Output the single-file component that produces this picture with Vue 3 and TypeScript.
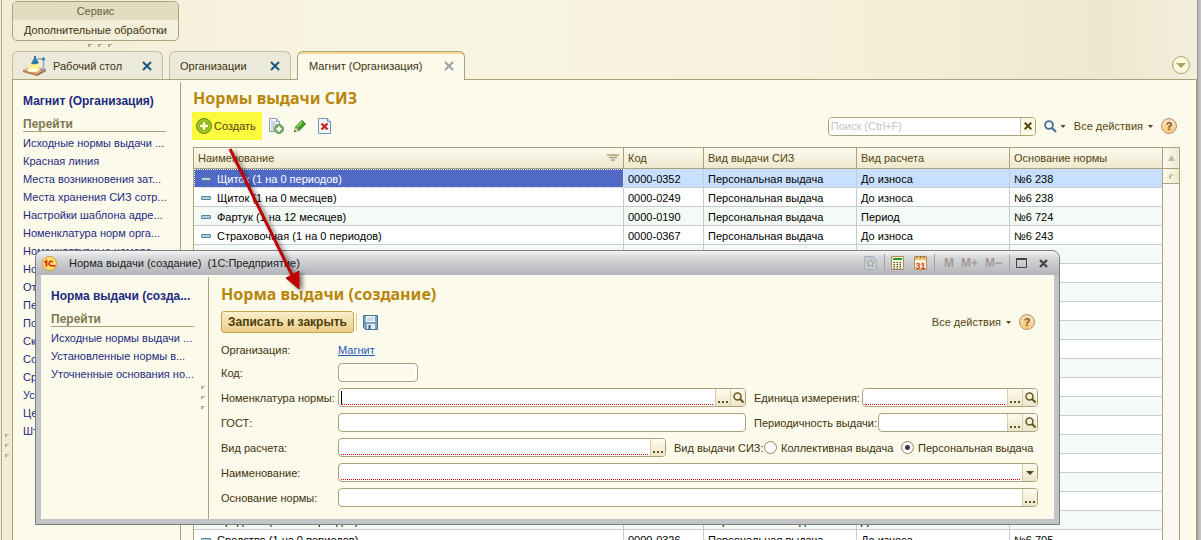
<script setup lang="ts">
import { ref } from 'vue'

interface NormRow {
  name: string
  code: string
  issue: string
  calc: string
  basis: string
}

const blank: NormRow = { name: '', code: '', issue: '', calc: '', basis: '' }
const issue = 'Персональная выдача'

const rows: NormRow[] = [
  { name: 'Щиток (1 на 0 периодов)', code: '0000-0352', issue, calc: 'До износа', basis: '№6 238' },
  { name: 'Щиток (1 на 0 месяцев)', code: '0000-0249', issue, calc: 'До износа', basis: '№6 238' },
  { name: 'Фартук (1 на 12 месяцев)', code: '0000-0190', issue, calc: 'Период', basis: '№6 724' },
  { name: 'Страховочная (1 на 0 периодов)', code: '0000-0367', issue, calc: 'До износа', basis: '№6 243' },
  ...Array.from({ length: 14 }, () => blank),
  { name: 'Средство (1 на 0 периодов)', code: '', issue, calc: 'До износа', basis: '' },
  { name: 'Средство (1 на 0 периодов)', code: '0000-0326', issue, calc: 'До износа', basis: '№6 705' },
]

const pageLinks = [
  'Исходные нормы выдачи ...',
  'Красная линия',
  'Места возникновения зат...',
  'Места хранения СИЗ сотр...',
  'Настройки шаблона адре...',
  'Номенклатура норм орга...',
  'Номенклатурные номера',
  'Но', 'От', 'Пе', 'По', 'Ск', 'Со', 'Ср', 'Ус', 'Це', 'Шт',
]

const dialogLinks = ['Исходные нормы выдачи ...', 'Установленные нормы в...', 'Уточненные основания но...']

const search = ref('')
const issueKind = ref('personal')
</script>

<template>
  <div class="app">
    <div class="rail"><i></i><i></i><i></i></div>

    <div class="desk">
      <section class="service">
        <h2>Сервис</h2>
        <a href="#">Дополнительные обработки</a>
      </section>
      <div class="grip"><i></i><i></i><i></i></div>

      <nav class="tabs">
        <div class="tab first">
          <svg class="lamp" width="24" height="20" viewBox="0 0 24 20" aria-hidden="true">
            <path d="M0 14 9 10l14 3-9 5z" fill="#d9a877" />
            <path d="M0 14v2l14 4v-2z" fill="#b97a4c" />
            <path d="M14 18v2l9-5v-2z" fill="#a2653d" />
            <path d="M8 7 4 14q5 3 13 0l-3-7z" fill="#fff08a" />
            <ellipse cx="10" cy="14" rx="6" ry="2" fill="#fffbd8" />
            <path d="M11 0h2v2l3 5q-4 2-8 1l3-6z" fill="#2c7ba6" />
            <path d="M13 3h8M20.500 3v10" stroke="#8fabbb" stroke-width="1.500" fill="none" />
            <circle cx="20.500" cy="3" r="1.700" fill="#3f86b0" />
            <path d="M17 13h6l-1 2h-4z" fill="#8b9aa4" />
          </svg>
          <a href="#">Рабочий стол</a>
          <button type="button" class="close" aria-label="Закрыть">
            <svg width="10" height="10" viewBox="0 0 10 10"><path d="M1 1l8 8M9 1 1 9" stroke="#1f5580" stroke-width="2" /></svg>
          </button>
        </div>
        <div class="tab second">
          <a href="#">Организации</a>
          <button type="button" class="close" aria-label="Закрыть">
            <svg width="10" height="10" viewBox="0 0 10 10"><path d="M1 1l8 8M9 1 1 9" stroke="#1f5580" stroke-width="2" /></svg>
          </button>
        </div>
        <div class="tab active">
          <a href="#">Магнит (Организация)</a>
          <button type="button" class="close" aria-label="Закрыть">
            <svg width="10" height="10" viewBox="0 0 10 10"><path d="M1 1l8 8M9 1 1 9" stroke="#9aa3a8" stroke-width="2" /></svg>
          </button>
        </div>
        <button type="button" class="tablist" aria-label="Список вкладок">
          <svg width="10" height="5" viewBox="0 0 10 5"><path d="M0 0h10L5 5z" fill="#aea26b" /></svg>
        </button>
      </nav>

      <main class="page">
        <aside class="side">
          <h3>Магнит (Организация)</h3>
          <h4>Перейти</h4>
          <a v-for="(link, i) in pageLinks" :key="i" href="#">{{ link }}</a>
        </aside>

        <section class="list">
          <h1>Нормы выдачи СИЗ</h1>
          <div class="toolbar">
            <button type="button" class="create">
              <svg width="16" height="16" viewBox="0 0 16 16" aria-hidden="true">
                <circle cx="8" cy="8" r="7.500" fill="#8fb51c" stroke="#6d8d1c" />
                <circle cx="8" cy="8" r="6" fill="none" stroke="#b5d52e" />
                <path d="M8 4v8M4 8h8" stroke="#fbffd0" stroke-width="2.500" />
              </svg>
              Создать
            </button>
            <button type="button" class="tool copy" aria-label="Скопировать">
              <svg width="16" height="16" viewBox="0 0 16 16">
                <path d="M1.500.5h7l3 3v10h-10z" fill="#f4f8fb" stroke="#8ba1b3" />
                <path d="M8.500.5v3h3" fill="#d5e1ea" stroke="#8ba1b3" />
                <path d="M3 4h4M3 6h6M3 8h6M3 10h4M3 12h3" stroke="#9eb3c2" />
                <circle cx="11" cy="11" r="4.500" fill="#83b26e" stroke="#5c8a57" />
                <path d="M11 8.500v5M8.500 11h5" stroke="#fff" stroke-width="2" />
              </svg>
            </button>
            <button type="button" class="tool edit" aria-label="Изменить">
              <svg width="12" height="12" viewBox="0 0 12 12">
                <path d="M8 0.500 11.500 4 5 10.500 1.500 7z" fill="#3f9e25" stroke="#237512" />
                <path d="M8 2 3 7" stroke="#9bdc6c" stroke-width="1.500" />
                <path d="M1.500 7 0 12l5-1.500z" fill="#e9e1ac" stroke="#67804c" stroke-width=".6" />
                <path d="M0 12l.6-2 1.400 1.500z" fill="#26430f" />
              </svg>
            </button>
            <button type="button" class="tool" aria-label="Удалить">
              <svg width="13" height="16" viewBox="0 0 13 16">
                <path d="M.5.500h9l3 3v12H.5z" fill="#f1f6fc" stroke="#7792ad" />
                <path d="M9.500.5v3h3" fill="#d5e1ea" stroke="#7792ad" />
                <path d="M3.500 5.500l6 6M9.500 5.500l-6 6" stroke="#c9231b" stroke-width="2.300" />
              </svg>
            </button>
            <div class="search">
              <input v-model="search" type="text" placeholder="Поиск (Ctrl+F)" aria-label="Поиск" />
              <button type="button" aria-label="Очистить">
                <svg width="8" height="8" viewBox="0 0 8 8"><path d="M.7.7l6.600 6.600M7.300.7.7 7.300" stroke="#554611" stroke-width="2" /></svg>
              </button>
            </div>
            <button type="button" class="tool find" aria-label="Найти">
              <svg width="22" height="13" viewBox="0 0 22 13">
                <circle cx="5" cy="5" r="3.900" fill="#f4fafd" stroke="#466f97" stroke-width="1.800" />
                <path d="M8 8l4 4" stroke="#466f97" stroke-width="2.200" />
                <path d="M16.500 5h5L19 8z" fill="#554611" />
              </svg>
            </button>
            <button type="button" class="actions">
              Все действия
              <svg width="5" height="3" viewBox="0 0 5 3"><path d="M0 0h5L2.500 3z" fill="#554611" /></svg>
            </button>
            <button type="button" class="help" aria-label="Справка">?</button>
          </div>

          <div class="grid">
            <table>
              <colgroup><col /><col class="c-code" /><col class="c-mid" /><col class="c-mid" /><col class="c-mid" /></colgroup>
              <thead>
                <tr>
                  <th>
                    <div class="sorted">
                      Наименование
                      <svg width="12" height="8" viewBox="0 0 12 8"><path d="M0 1h12M2 3.500h8M4 6h4" stroke="#aaa17a" stroke-width="1.600" /></svg>
                    </div>
                  </th>
                  <th>Код</th>
                  <th>Вид выдачи СИЗ</th>
                  <th>Вид расчета</th>
                  <th>Основание нормы</th>
                </tr>
              </thead>
              <tbody>
                <tr v-for="(row, i) in rows" :key="i" :class="{ selected: i === 0 }">
                  <td><span v-if="row.name" class="item">{{ row.name }}</span></td>
                  <td>{{ row.code }}</td>
                  <td>{{ row.issue }}</td>
                  <td>{{ row.calc }}</td>
                  <td>{{ row.basis }}</td>
                </tr>
              </tbody>
            </table>
            <div class="scroll">
              <div class="up"><svg width="7" height="6" viewBox="0 0 7 6"><path d="M0 6h7L3.500 0z" fill="#bdbbaa" /></svg></div>
              <div class="thumb"><i></i></div>
            </div>
          </div>
        </section>
      </main>
    </div>
    <div class="edge"></div>

    <section class="dialog" role="dialog" aria-label="Норма выдачи (создание)">
      <header class="titlebar">
        <svg width="15" height="15" viewBox="0 0 15 15" aria-hidden="true">
          <circle cx="7.500" cy="7.500" r="7" fill="#fbe06a" stroke="#d99b3a" />
          <path d="M2.500 6.500 4.500 5v5.500" fill="none" stroke="#d9231c" stroke-width="1.800" />
          <path d="M10.800 6a2.200 2.200 0 1 0-1.800 3.700h4.500" fill="none" stroke="#d9231c" stroke-width="1.600" />
        </svg>
        <span class="caption">Норма выдачи (создание)&nbsp; (1С:Предприятие)</span>
        <button type="button" class="tool fav" aria-label="В избранное">
          <svg width="13" height="14" viewBox="0 0 13 14">
            <path d="M.5.500h9l3 3v10H.5z" fill="#c5cbd0" stroke="#a4b1bb" />
            <path d="M6.500 3.500l1.200 2.300 2.500.4-1.800 1.800.4 2.500-2.300-1.200-2.300 1.200.4-2.500L2.800 6.200l2.500-.4z" fill="#d8d2c5" stroke="#a69f94" />
          </svg>
        </button>
        <i class="sep"></i>
        <button type="button" class="tool calc" aria-label="Калькулятор">
          <svg width="13" height="14" viewBox="0 0 13 14">
            <path d="M.5.500h12v13H.5z" fill="#fbf3d5" stroke="#b08c58" />
            <path d="M2 2h9v2H2z" fill="#2b9b35" />
            <path d="M2.500 6.500h8M2.500 8.500h8M2.500 10.500h8M2.500 12.200h8" stroke="#4b4638" stroke-dasharray="1.500 1.500" />
          </svg>
        </button>
        <button type="button" class="tool" aria-label="Календарь">
          <svg width="13" height="14" viewBox="0 0 13 14">
            <path d="M.5.500h12v13H.5z" fill="#fdf3dc" stroke="#b88d58" />
            <path d="M1 1h11v3H1z" fill="#edbf74" />
            <path d="M3 0v2M6.500 0v2M10 0v2" stroke="#7d6341" />
            <text x="6.500" y="12.500" text-anchor="middle" font-family="Liberation Sans, sans-serif" font-size="9" font-weight="700" fill="#e23c1b">31</text>
          </svg>
        </button>
        <i class="sep"></i>
        <button type="button" class="mem">M</button>
        <button type="button" class="mem">M+</button>
        <button type="button" class="mem last">M−</button>
        <i class="sep"></i>
        <button type="button" class="tool max" aria-label="Развернуть">
          <svg width="11" height="10" viewBox="0 0 11 10"><path d="M.5.500h10v9H.5z" fill="none" stroke="#434345" /><path d="M0 1h11" stroke="#434345" stroke-width="2" /></svg>
        </button>
        <button type="button" class="tool" aria-label="Закрыть">
          <svg width="9" height="9" viewBox="0 0 9 9"><path d="M1 1l7 7M8 1 1 8" stroke="#434345" stroke-width="2.400" /></svg>
        </button>
      </header>

      <div class="body">
        <aside class="side inner">
          <h3>Норма выдачи (созда...</h3>
          <h4>Перейти</h4>
          <a v-for="link in dialogLinks" :key="link" href="#">{{ link }}</a>
          <div class="vgrip"><i></i><i></i><i></i></div>
        </aside>

        <form class="form" @submit.prevent>
          <h1>Норма выдачи (создание)</h1>
          <div class="commands">
            <button type="submit" class="primary">Записать и закрыть</button>
            <i class="divider"></i>
            <button type="button" class="tool save" aria-label="Записать">
              <svg width="15" height="15" viewBox="0 0 15 15">
                <path d="M.5.500h14v14H2.500l-2-2z" fill="#7fa3bd" stroke="#46708d" />
                <path d="M3 1h9v6H3z" fill="#f3f8fb" />
                <path d="M4 3h7M4 5h7" stroke="#a5bccb" />
                <path d="M4 9h8v5H4z" fill="#e6ecef" />
                <path d="M5.500 10h2v4h-2z" fill="#3b5b72" />
              </svg>
            </button>
            <button type="button" class="actions">
              Все действия
              <svg width="5" height="3" viewBox="0 0 5 3"><path d="M0 0h5L2.500 3z" fill="#554611" /></svg>
            </button>
            <button type="button" class="help" aria-label="Справка">?</button>
          </div>

          <div class="row org">
            <span class="label">Организация:</span>
            <a href="#">Магнит</a>
          </div>
          <div class="row code">
            <label class="label" for="f-code">Код:</label>
            <div class="field short"><input id="f-code" type="text" /></div>
          </div>
          <div class="row">
            <label class="label" for="f-item">Номенклатура нормы:</label>
            <div class="field required">
              <i class="caret"></i>
              <input id="f-item" type="text" />
              <button type="button" aria-label="Выбрать"><span class="dots"></span></button>
              <button type="button" aria-label="Открыть">
                <svg width="11" height="11" viewBox="0 0 11 11"><circle cx="4.500" cy="4.500" r="3.500" fill="none" stroke="#66551d" stroke-width="1.500" /><path d="M7 7l3.500 3.500" stroke="#66551d" stroke-width="2" /></svg>
              </button>
            </div>
            <div class="right">
              <label for="f-unit">Единица измерения:</label>
              <div class="field required unit">
                <input id="f-unit" type="text" />
                <button type="button" aria-label="Выбрать"><span class="dots"></span></button>
                <button type="button" aria-label="Открыть">
                  <svg width="11" height="11" viewBox="0 0 11 11"><circle cx="4.500" cy="4.500" r="3.500" fill="none" stroke="#66551d" stroke-width="1.500" /><path d="M7 7l3.500 3.500" stroke="#66551d" stroke-width="2" /></svg>
                </button>
              </div>
            </div>
          </div>
          <div class="row">
            <label class="label" for="f-gost">ГОСТ:</label>
            <div class="field"><input id="f-gost" type="text" /></div>
            <div class="right">
              <label for="f-period">Периодичность выдачи:</label>
              <div class="field period">
                <input id="f-period" type="text" />
                <button type="button" aria-label="Выбрать"><span class="dots"></span></button>
                <button type="button" aria-label="Открыть">
                  <svg width="11" height="11" viewBox="0 0 11 11"><circle cx="4.500" cy="4.500" r="3.500" fill="none" stroke="#66551d" stroke-width="1.500" /><path d="M7 7l3.500 3.500" stroke="#66551d" stroke-width="2" /></svg>
                </button>
              </div>
            </div>
          </div>
          <div class="row">
            <label class="label" for="f-calc">Вид расчета:</label>
            <div class="field required">
              <input id="f-calc" type="text" />
              <button type="button" aria-label="Выбрать"><span class="dots"></span></button>
            </div>
            <div class="kinds" role="radiogroup" aria-label="Вид выдачи СИЗ">
              <span class="kinds-title">Вид выдачи СИЗ:</span>
              <label><input v-model="issueKind" type="radio" name="kind" value="group" />Коллективная выдача</label>
              <label><input v-model="issueKind" type="radio" name="kind" value="personal" />Персональная выдача</label>
            </div>
          </div>
          <div class="row">
            <label class="label" for="f-name">Наименование:</label>
            <div class="field required">
              <input id="f-name" type="text" />
              <button type="button" aria-label="Показать варианты">
                <svg width="8" height="4" viewBox="0 0 8 4"><path d="M0 0h8L4 4z" fill="#554611" /></svg>
              </button>
            </div>
          </div>
          <div class="row">
            <label class="label" for="f-basis">Основание нормы:</label>
            <div class="field">
              <input id="f-basis" type="text" />
              <button type="button" aria-label="Выбрать"><span class="dots"></span></button>
            </div>
          </div>
        </form>
      </div>
    </section>

    <svg class="arrow" width="90" height="160" viewBox="0 0 90 160" aria-hidden="true">
      <path d="M10 9 73 137" stroke="#c00000" stroke-width="3" />
      <path d="M66 138 79 131v18z" fill="#c00000" stroke="#c00000" />
    </svg>
  </div>
</template>

<style>
html,
body {
  background: #f4efdc;
}
</style>

<style scoped>
.app {
  position: relative;
  display: flex;
  height: 100vh;
  min-height: 540px;
  overflow: hidden;
  box-sizing: border-box;
  font: 11px/14px "Liberation Sans", Arial, sans-serif;
  color: #40330c;
  background: linear-gradient(90deg, #f2ecd6 0, #f8f5e1 30%, #f6f2dd 65%, #efe8d0 92%, #f2efdc 100%);
}
.app *,
.app *::before {
  box-sizing: border-box;
}
a {
  color: inherit;
  text-decoration: none;
}
button {
  display: flex;
  align-items: center;
  justify-content: center;
  padding: 0;
  border: 0;
  background: none;
  font: inherit;
  color: inherit;
}
input {
  font: inherit;
  outline: none;
}
h1,
h2,
h3,
h4 {
  margin: 0;
}
svg {
  flex: none;
}

.rail {
  flex: none;
  display: flex;
  flex-direction: column;
  align-items: center;
  gap: 7px;
  width: 10px;
  margin: 0 1px;
  padding-top: 434px;
  border-left: 1px solid #b5ad85;
}
.rail i,
.grip i,
.vgrip i {
  width: 4px;
  height: 3px;
  border: solid #b5ad85;
  border-width: 1px 0 0 2px;
}
.desk {
  flex: 1;
  min-width: 0;
  display: flex;
  flex-direction: column;
}
.edge {
  flex: none;
  width: 4px;
  background: linear-gradient(90deg, #8c8c8c, #b9b9b9 40%, #c4c4c4);
}

.service {
  flex: none;
  align-self: flex-start;
  width: 167px;
  height: 40px;
  margin-top: 1px;
  border: 1px solid #aaa27b;
  border-radius: 5px;
  overflow: hidden;
  text-align: center;
}
.service h2 {
  height: 18px;
  background: #e2dcc0;
  font: inherit;
  line-height: 19px;
  color: #6b6140;
}
.service a {
  display: block;
  line-height: 21px;
}
.grip {
  flex: none;
  display: flex;
  gap: 6px;
  width: 175px;
  height: 10px;
  padding-top: 3px;
  justify-content: center;
}

.tabs {
  flex: none;
  display: flex;
  align-items: flex-end;
  height: 28px;
  gap: 6px;
}
.tab {
  display: flex;
  align-items: center;
  height: 28px;
  border: 1px solid #c5bf9e;
  border-bottom: 0;
  border-radius: 6px 6px 0 0;
  background: #ebe9da;
  padding: 0 9px 0 10px;
}
.tab a {
  flex: 1;
  white-space: nowrap;
}
.tab.first {
  width: 151px;
}
.lamp {
  margin-right: 6px;
}
.tab.second {
  width: 122px;
}
.tab.active {
  position: relative;
  width: 168px;
  height: 29px;
  margin-bottom: -1px;
  padding-left: 11px;
  border-color: #aaa27b;
  background: linear-gradient(#f9d898 0, #f9d898 2px, #fcfaeb 2px);
}
.close {
  width: 12px;
  height: 12px;
}
.tablist {
  width: 18px;
  height: 18px;
  margin: 0 7px 5px auto;
  border: 1px solid #aaa27b;
  border-radius: 50%;
  background: #fbf8dc;
}

.page {
  flex: 1;
  min-height: 0;
  display: flex;
  border: 1px solid #aaa27b;
  border-bottom: 0;
  background: #fcfaeb;
}
.side {
  flex: none;
  width: 168px;
  margin-top: 2px;
  padding: 12px 14px 0 10px;
  border-right: 1px solid #aaa27b;
  color: #1c2b80;
}
.side h3 {
  margin-bottom: 10px;
  font-size: 12px;
  line-height: 14px;
  white-space: nowrap;
}
.side h4 {
  margin-bottom: 2px;
  border-bottom: 1px solid #aaa27b;
  font-size: 12px;
  line-height: 13px;
  color: #80784f;
}
.side a {
  display: block;
  height: 18px;
  line-height: 18px;
  white-space: nowrap;
}

.list {
  flex: 1;
  min-width: 0;
  display: flex;
  flex-direction: column;
  padding: 8px 16px 0 12px;
}
h1 {
  font: bold 16px/20px "Noto Sans", "Open Sans", sans-serif;
  color: #b8860b;
  white-space: nowrap;
}
.toolbar {
  flex: none;
  display: flex;
  align-items: center;
  height: 28px;
  margin: 4px 0 7px;
  color: #554611;
}
.create {
  height: 28px;
  gap: 2px;
  padding: 0 6px 0 4px;
  margin-left: -1px;
  background: #fcfa3c;
}
.copy {
  margin-left: 6px;
}
.edit {
  margin: 0 12px 0 10px;
}
.search {
  display: flex;
  width: 208px;
  height: 19px;
  margin-left: auto;
  border: 1px solid #aaa27b;
  border-radius: 4px;
  overflow: hidden;
  background: #fff;
}
.search input {
  flex: 1;
  min-width: 0;
  border: 0;
  padding: 0 2px;
}
.search input::placeholder {
  color: #c6c4c0;
}
.search button {
  width: 15px;
  border-left: 1px solid #c5bf9e;
  background: #fbf8e4;
}
.find {
  margin: 0 8px;
}
.actions {
  gap: 5px;
  color: #554611;
  white-space: nowrap;
}
.help {
  width: 16px;
  height: 16px;
  margin-left: 8px;
  border: 1px solid #b8906a;
  border-radius: 50%;
  background: radial-gradient(circle at 50% 75%, #fbc36a, #fbdcb0 60%, #f3dcc5);
  font-weight: 700;
  color: #74522c;
}
.toolbar .help {
  margin-right: 3px;
}

.grid {
  flex: 1;
  min-height: 0;
  display: flex;
  align-items: stretch;
  overflow: hidden;
  border: 1px solid #aaa27b;
  border-bottom: 0;
}
table {
  flex: 1;
  align-self: flex-start;
  width: 0;
  table-layout: fixed;
  border-collapse: separate;
  border-spacing: 0;
  color: #000;
}
.c-code {
  width: 80px;
}
.c-mid {
  width: 153px;
}
th {
  height: 21px;
  padding: 0 4px;
  border: solid #aaa27b;
  border-width: 0 1px 1px 0;
  background: linear-gradient(#fdfbf0, #efe8cd);
  font-weight: 400;
  text-align: left;
  color: #554611;
}
.sorted {
  display: flex;
  align-items: center;
  justify-content: space-between;
}
td {
  height: 19px;
  padding: 2px 4px 0;
  border: solid #c5cdd2;
  border-width: 0 1px 1px 0;
  background: #fff;
  line-height: 16px;
  white-space: nowrap;
  overflow: hidden;
}
tr:nth-child(odd) td {
  background: #f4faf6;
}
th:last-child,
td:last-child {
  border-right-color: #aaa27b;
}
tr.selected td {
  background: #c8e0ff;
}
tr.selected td:first-child {
  background: #5069c4;
  outline: 1px dotted #fff;
  outline-offset: -1px;
  color: #fff;
}
.item::before {
  content: "";
  display: inline-block;
  width: 10px;
  height: 4px;
  margin: 0 6px 3px 3px;
  border: 1px solid #55819a;
  border-radius: 1px;
  background: #b3d0dd;
  vertical-align: middle;
}
.scroll {
  flex: none;
  width: 16px;
  background: #f9f8f2;
}
.up,
.thumb {
  display: flex;
  align-items: center;
  justify-content: center;
  background: linear-gradient(90deg, #fcfaf0, #f0ead2);
  border-bottom: 1px solid #aaa27b;
}
.up {
  height: 21px;
}
.thumb {
  height: 15px;
}
.thumb i {
  width: 5px;
  height: 5px;
  border: solid #bdb58f;
  border-width: 1px 0 0 2px;
  border-radius: 3px;
}

.dialog {
  position: absolute;
  left: 35px;
  right: 141px;
  top: 250px;
  padding: 0 5px 5px;
  border: 1px solid #7d7d7f;
  border-radius: 8px 8px 0 0;
  background: #c3c4c7;
}
.titlebar {
  display: flex;
  align-items: center;
  height: 24px;
  margin: 0 -5px;
  padding: 0 11px 0 6px;
  border-radius: 7px 7px 0 0;
  background: linear-gradient(#f4f4f5, #d5d6d8 30%, #b3b4b7);
  color: #1c1c1c;
}
.caption {
  flex: 1;
  padding-left: 12px;
  white-space: nowrap;
}
.sep {
  align-self: flex-start;
  width: 1px;
  height: 17px;
  margin: 3px 6px 0 7px;
  background: #a2a3a6;
}
.calc {
  margin-right: 10px;
}
.mem {
  margin: 0 4px 0 3px;
  font-size: 12px;
  font-weight: 700;
  color: #a49a95;
}
.mem.last {
  margin-right: 0;
}
.max {
  margin-right: 12px;
}
.body {
  display: flex;
  height: 244px;
  background: #fcfaeb;
}
.inner {
  position: relative;
}
.vgrip {
  position: absolute;
  right: 3px;
  top: 109px;
  display: flex;
  flex-direction: column;
  gap: 7px;
}
.form {
  flex: 1;
  min-width: 0;
  padding: 9px 16px 0 12px;
}
.commands {
  display: flex;
  align-items: center;
  height: 22px;
  margin: 7px 0 7px;
}
.primary {
  height: 22px;
  padding: 0 6px;
  border: 1px solid #c9a54c;
  border-radius: 3px;
  background: linear-gradient(#fbeecb, #edcd89);
  font-size: 12px;
  font-weight: 700;
  color: #4b3c09;
}
.divider {
  width: 1px;
  height: 18px;
  margin: 0 6px 0 2px;
  background: #d8d0ae;
}
.commands .actions {
  margin-left: auto;
}
.commands .help {
  margin-right: 3px;
}
.row {
  display: flex;
  align-items: center;
  height: 19px;
  margin-bottom: 6px;
}
.row.org {
  margin-bottom: 4px;
}
.org a {
  color: #1d57b8;
  text-decoration: underline;
}
.label {
  flex: none;
  width: 117px;
  white-space: nowrap;
}
.field {
  flex: 1;
  min-width: 0;
  position: relative;
  display: flex;
  height: 19px;
  border: 1px solid #aaa27b;
  border-radius: 4px;
  overflow: hidden;
  background: #fff;
}
.field.short {
  flex: none;
  width: 80px;
}
.field input {
  flex: 1;
  min-width: 0;
  margin: 0 2px;
  padding: 0 2px;
  border: 0;
  background: transparent;
}
.short input {
  margin: 2px;
  background: #fcfaeb;
}
.required input {
  margin-bottom: 1px;
  border-bottom: 1px dotted #e00000;
}
.caret {
  position: absolute;
  left: 2px;
  top: 2px;
  width: 1px;
  height: 13px;
  background: #000;
}
.field button {
  flex: none;
  width: 15px;
  border-left: 1px solid #d3cdae;
  background: linear-gradient(#fdfbf0, #ece6c8);
}
.dots {
  width: 10px;
  height: 2px;
  margin-top: 8px;
  background: repeating-linear-gradient(90deg, #66551d 0, #66551d 2px, transparent 2px, transparent 4px);
}
.right {
  flex: none;
  display: flex;
  align-items: center;
  justify-content: space-between;
  width: 284px;
  margin-left: 8px;
  white-space: nowrap;
}
.unit {
  flex: none;
  width: 176px;
}
.period {
  flex: none;
  width: 160px;
}
.kinds {
  flex: none;
  display: flex;
  align-items: center;
  width: 364px;
  margin-left: 8px;
  white-space: nowrap;
}
.kinds-title {
  width: 90px;
}
.kinds label {
  display: flex;
  align-items: center;
  gap: 4px;
  width: 137px;
}
.kinds input {
  appearance: none;
  flex: none;
  width: 13px;
  height: 13px;
  margin: 0;
  border: 1px solid #8f865e;
  border-radius: 50%;
  background: #fff;
}
.kinds input:checked {
  background: radial-gradient(circle, #39393f 0, #39393f 2px, #fff 3px);
}
.arrow {
  position: absolute;
  left: 220px;
  top: 140px;
  filter: drop-shadow(3px 2px 2px rgba(0, 0, 0, 0.5));
  pointer-events: none;
}
</style>
